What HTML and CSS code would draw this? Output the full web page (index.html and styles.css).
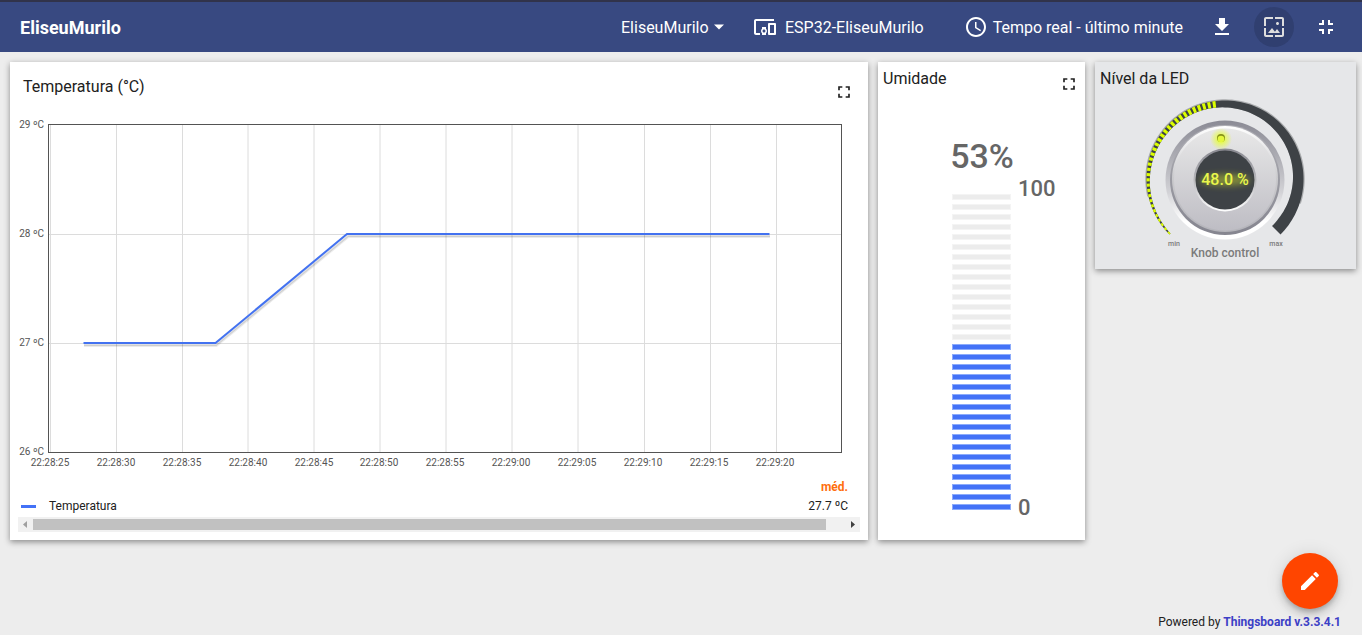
FILE: index.html
```html
<!DOCTYPE html>
<html lang="pt-BR">
<head>
<meta charset="utf-8">
<title>EliseuMurilo</title>
<meta name="viewport" content="width=device-width, initial-scale=1">
<link rel="stylesheet" href="styles.css">
</head>
<body>
<header class="toolbar">
  <h1 class="toolbar-title">EliseuMurilo</h1>
  <div class="state-select">
    <select class="state-input" aria-label="Estado"><option>EliseuMurilo</option></select>
    <svg class="caret" viewBox="0 0 12 6" aria-hidden="true"><path d="M1 .5h10L6 5.5z" fill="currentColor"/></svg>
  </div>
  <button class="nav-button entity" type="button">
    <svg class="icon-24" viewBox="0 0 24 24" aria-hidden="true"><path fill="currentColor" d="M3 6h18V4H3c-1.100 0-2 .9-2 2v12c0 1.100.9 2 2 2h4v-2H3V6zm10 6H9v1.780c-.61.55-1 1.330-1 2.220s.39 1.670 1 2.220V20h4v-1.780c.61-.55 1-1.340 1-2.220s-.39-1.670-1-2.220V12zm-2 5.500c-.83 0-1.500-.67-1.500-1.500s.67-1.500 1.500-1.500 1.500.67 1.500 1.500-.67 1.500-1.500 1.500zM22 8h-6c-.5 0-1 .5-1 1v10c0 .5.5 1 1 1h6c.5 0 1-.5 1-1V9c0-.5-.5-1-1-1zm-1 10h-4v-8h4v8z"/></svg>
    <span>ESP32-EliseuMurilo</span>
  </button>
  <button class="nav-button time" type="button">
    <svg class="icon-24" viewBox="0 0 24 24" aria-hidden="true"><path fill="currentColor" d="M11.990 2C6.470 2 2 6.480 2 12s4.470 10 9.990 10C17.520 22 22 17.520 22 12S17.520 2 11.990 2zM12 20c-4.420 0-8-3.580-8-8s3.580-8 8-8 8 3.580 8 8-3.580 8-8 8zm.5-13H11v6l5.250 3.150.75-1.230-4.500-2.670z"/></svg>
    <span>Tempo real - último minute</span>
  </button>
  <div class="actions">
    <button class="round-button" type="button" aria-label="Exportar">
      <svg class="icon-24" viewBox="0 0 24 24" aria-hidden="true"><path fill="currentColor" d="M19 9h-4V3H9v6H5l7 7 7-7zM5 18v2h14v-2H5z"/></svg>
    </button>
    <button class="round-button active" type="button" aria-label="Imagem do painel">
      <svg class="icon-24" viewBox="0 0 24 24" aria-hidden="true"><path fill="currentColor" d="M4 4h7V2H4c-1.100 0-2 .9-2 2v7h2V4zm6 9l-4 5h12l-3-4-2.030 2.710L10 13zm7-4.500c0-.83-.67-1.500-1.500-1.500S14 7.670 14 8.500s.67 1.500 1.500 1.500S17 9.330 17 8.500zM20 2h-7v2h7v7h2V4c0-1.100-.9-2-2-2zm0 18h-7v2h7c1.100 0 2-.9 2-2v-7h-2v7zM4 13H2v7c0 1.100.9 2 2 2h7v-2H4v-7z"/></svg>
    </button>
    <button class="round-button" type="button" aria-label="Sair da tela cheia">
      <svg class="icon-24" viewBox="0 0 24 24" aria-hidden="true"><path fill="currentColor" d="M5 16h3v3h2v-5H5v2zm3-8H5v2h5V5H8v3zm6 11h2v-3h3v-2h-5v5zm2-11V5h-2v5h5V8h-3z"/></svg>
    </button>
  </div>
</header>

<main class="dashboard">
  <section class="card chart-card">
    <div class="card-head wide">
      <h2 class="card-title">Temperatura (°C)</h2>
      <button class="expand" type="button" aria-label="Tela cheia">
        <svg class="icon-20" viewBox="0 0 24 24" aria-hidden="true"><path fill="currentColor" d="M7 14H5v5h5v-2H7v-3zm-2-4h2V7h3V5H5v5zm12 7h-3v2h5v-5h-2v3zM14 5v2h3v3h2V5h-5z"/></svg>
      </button>
    </div>
    <svg class="figure" viewBox="10 116 858 362" role="img" aria-label="Gráfico de temperatura">
      <path class="grid-line" d="M50.500 125v327M116.500 125v327M182.500 125v327M248 125v327M314 125v327M380 125v327M446 125v327M512 125v327M578 125v327M644.500 125v327M710.500 125v327M776.500 125v327M49 234.500h792M49 343.500h792"/>
      <path class="series-shadow" d="M84 345H216L348 236H770"/>
      <path class="series-shadow soft" d="M84 346H216.500L348.500 237H770"/>
      <path class="series" d="M83.500 343H215.500L347 234H769.500"/>
      <rect class="plot-frame" x="48.500" y="124.500" width="793" height="328"/>
      <g class="axis y-axis">
        <text x="44" y="128">29 ºC</text><text x="44" y="237">28 ºC</text><text x="44" y="346">27 ºC</text><text x="44" y="455">26 ºC</text>
      </g>
      <g class="axis x-axis">
        <text x="50" y="466">22:28:25</text><text x="116" y="466">22:28:30</text><text x="182" y="466">22:28:35</text><text x="248" y="466">22:28:40</text><text x="314" y="466">22:28:45</text><text x="379" y="466">22:28:50</text><text x="445" y="466">22:28:55</text><text x="511" y="466">22:29:00</text><text x="577" y="466">22:29:05</text><text x="643" y="466">22:29:10</text><text x="709" y="466">22:29:15</text><text x="775" y="466">22:29:20</text>
      </g>
    </svg>
    <table class="legend">
      <thead><tr><td></td><th scope="col">méd.</th></tr></thead>
      <tbody><tr><td><span class="legend-key"><span class="swatch"></span>Temperatura</span></td><td class="value">27.7 ºC</td></tr></tbody>
    </table>
    <div class="scrollbar" aria-hidden="true">
      <svg class="arrow dim" viewBox="0 0 15 15"><path d="M9 4v7L5 7.500z" fill="currentColor"/></svg>
      <div class="track"><div class="thumb"></div></div>
      <svg class="arrow" viewBox="0 0 15 15"><path d="M6 4v7l4-3.500z" fill="currentColor"/></svg>
    </div>
  </section>

  <section class="card">
    <div class="card-head">
      <h2 class="card-title">Umidade</h2>
      <button class="expand" type="button" aria-label="Tela cheia">
        <svg class="icon-20" viewBox="0 0 24 24" aria-hidden="true"><path fill="currentColor" d="M7 14H5v5h5v-2H7v-3zm-2-4h2V7h3V5H5v5zm12 7h-3v2h5v-5h-2v3zM14 5v2h3v3h2V5h-5z"/></svg>
      </button>
    </div>
    <svg class="figure" viewBox="878 102 207 438" role="img" aria-label="Umidade 53%">
      <defs>
        <pattern id="bar-off" x="952" y="194" width="59" height="10" patternUnits="userSpaceOnUse"><rect width="59" height="6" fill="#f4f4f4"/><rect x="1" y="1" width="57" height="4" fill="#ececec"/></pattern>
        <pattern id="bar-on" x="952" y="344" width="59" height="10" patternUnits="userSpaceOnUse"><rect width="59" height="6" fill="#8cabfb"/><rect x="1" y="1" width="57" height="4" fill="#4372f7"/></pattern>
      </defs>
      <rect x="952" y="194" width="59" height="150" fill="url(#bar-off)"/>
      <rect x="952" y="344" width="59" height="170" fill="url(#bar-on)"/>
      <text class="gauge-value" x="982" y="168">53%</text>
      <text class="gauge-limit" x="1018" y="196">100</text>
      <text class="gauge-limit" x="1018" y="515">0</text>
    </svg>
  </section>

  <section class="card knob-card">
    <div class="card-head short">
      <h2 class="card-title">Nível da LED</h2>
    </div>
    <svg class="figure" viewBox="1095 94 261 175" role="img" aria-label="Knob control 48.0 %">
      <defs>
        <linearGradient id="rim" x1="0" y1="0" x2="0" y2="1"><stop offset="0" stop-color="#8b8b95"/><stop offset=".3" stop-color="#acacb3"/><stop offset=".6" stop-color="#d2d2d6"/><stop offset=".85" stop-color="#fff"/></linearGradient>
        <linearGradient id="bevel" x1="0" y1="0" x2="0" y2="1"><stop offset="0" stop-color="#b0b0b6"/><stop offset="1" stop-color="#85858f"/></linearGradient>
        <linearGradient id="edge" x1="0" y1="0" x2="0" y2="1"><stop offset="0" stop-color="#fff"/><stop offset=".5" stop-color="#cacacd"/><stop offset="1" stop-color="#b4b4ba"/></linearGradient>
        <linearGradient id="face" x1="0" y1="0" x2="0" y2="1"><stop offset="0" stop-color="#e8e8e8"/><stop offset="1" stop-color="#bebdc4"/></linearGradient>
        <linearGradient id="well" x1="0" y1="0" x2="0" y2="1"><stop offset="0" stop-color="#888890"/><stop offset=".5" stop-color="#b8b8bc"/><stop offset="1" stop-color="#fff"/></linearGradient>
        <radialGradient id="glow"><stop offset=".3" stop-color="#e6ff33" stop-opacity=".8"/><stop offset="1" stop-color="#e6ff33" stop-opacity="0"/></radialGradient>
        <filter id="blur" x="-50%" y="-100%" width="200%" height="300%"><feGaussianBlur stdDeviation="3"/></filter>
      </defs>
      <g id="knob-scale"></g>
      <circle cx="1225" cy="180" r="59.500" fill="url(#rim)"/>
      <circle cx="1225" cy="180" r="55" fill="url(#bevel)"/>
      <circle cx="1225" cy="179" r="53" fill="url(#edge)"/>
      <circle cx="1225" cy="179.500" r="51" fill="url(#face)"/>
      <circle cx="1225" cy="180" r="31.500" fill="url(#well)"/>
      <circle cx="1225" cy="180" r="29.500" fill="#3e4246"/>
      <circle cx="1221" cy="139" r="11" fill="url(#glow)"/>
      <circle cx="1221" cy="138" r="4" fill="#85921a"/>
      <circle cx="1221" cy="139" r="3.300" fill="#e4f73c"/>
      <ellipse cx="1225" cy="180" rx="25" ry="6" fill="#dff22c" opacity=".4" filter="url(#blur)"/>
      <text class="knob-value" x="1225" y="185">48.0 %</text>
      <text class="knob-limit" x="1174" y="246">min</text>
      <text class="knob-limit" x="1276" y="246">max</text>
      <text class="knob-label" x="1225" y="257">Knob control</text>
    </svg>
  </section>
</main>

<button class="fab" type="button" aria-label="Editar">
  <svg class="icon-24" viewBox="0 0 24 24" aria-hidden="true"><path fill="currentColor" d="M3 17.250V21h3.750L17.810 9.940l-3.750-3.750L3 17.250zM20.710 7.040c.39-.39.39-1.020 0-1.410l-2.340-2.340c-.39-.39-1.020-.39-1.410 0l-1.830 1.830 3.750 3.750 1.830-1.830z"/></svg>
</button>
<footer class="footer">Powered by <a class="footer-link" href="#">Thingsboard v.3.3.4.1</a></footer>
<script src="knob.js"></script>
</body>
</html>
```

FILE: knob.js
```js
// Draws the tapered 270 degree scale of the knob, with lit ticks up to its value.
(function () {
  var cx = 1225, cy = 179, outer = 78.5, value = 0.48, ticks = 33;
  var scale = document.getElementById('knob-scale');
  function point(t, r) {
    var a = (135 + 270 * t) * Math.PI / 180;
    return (cx + r * Math.cos(a)).toFixed(2) + ',' + (cy + r * Math.sin(a)).toFixed(2);
  }
  function thickness(t) { return 1.5 + 10.5 * Math.min(1, t * 1.03); }
  function band(from, to, color, grow) {
    var pts = [], n = Math.max(2, Math.ceil((to - from) * 120)), i, t;
    for (i = 0; i <= n; i++) pts.push(point(from + (to - from) * i / n, outer + grow));
    for (i = n; i >= 0; i--) {
      t = from + (to - from) * i / n;
      pts.push(point(t, outer - thickness(t)));
    }
    var p = document.createElementNS('http://www.w3.org/2000/svg', 'polygon');
    p.setAttribute('points', pts.join(' '));
    p.setAttribute('fill', color);
    scale.appendChild(p);
  }
  band(0.12, 0.9, '#a9abad', 1.2);
  band(0, 1, '#3e4246', 0);
  for (var k = 0; k < ticks; k++) {
    var start = value * k / ticks;
    band(start, start + value / ticks * 0.58, '#dcff00', 0);
  }
})();
```

FILE: styles.css
```css
* { box-sizing: border-box; }

body {
  display: flex;
  flex-direction: column;
  min-height: 100vh;
  margin: 0;
  background: #ededed;
  color: #212121;
  font: 16px/24px Roboto, "Liberation Sans", sans-serif;
}

button, select {
  margin: 0;
  padding: 0;
  border: 0;
  background: none;
  color: inherit;
  font: inherit;
  cursor: pointer;
}

svg { display: block; }
.icon-24 { width: 24px; height: 24px; flex: none; }
.icon-20 { width: 20px; height: 20px; }

.toolbar {
  display: flex;
  align-items: center;
  height: 52px;
  padding: 0 16px 0 20px;
  border-top: 2px solid #31334a;
  background: #384981;
  color: #fff;
}

.toolbar-title {
  flex: 1;
  margin: 0;
  padding-top: 2px;
  font-size: 18px;
  font-weight: 700;
}

.state-select { display: flex; align-items: center; gap: 4px; margin-right: 28px; }
.state-input { appearance: none; outline: 0; padding-top: 2px; }
.caret { width: 12px; height: 6px; }
.nav-button { display: flex; align-items: center; white-space: nowrap; }
.nav-button span { padding-top: 2px; }
.entity { gap: 8px; margin-right: 40px; }
.time { gap: 5px; margin-right: 19px; }
.actions { display: flex; gap: 12px; }

.round-button {
  display: grid;
  place-items: center;
  width: 40px;
  height: 40px;
  border-radius: 50%;
}

.round-button.active { background: #303f70; color: #dedede; }

.dashboard {
  display: grid;
  grid-template-columns: 858fr 207fr 261fr;
  align-items: start;
  gap: 10px;
  padding: 10px 6px 10px 10px;
}

.card {
  min-width: 0;
  background: #fff;
  box-shadow: 0 2px 6px rgba(0, 0, 0, .42);
}

.chart-card { padding-bottom: 8px; }
.knob-card { background: #e6e7e9; }

.card-head {
  display: flex;
  align-items: flex-start;
  justify-content: space-between;
  height: 40px;
  padding: 5px 6px 0 5px;
}

.card-head.wide { height: 54px; padding: 13px 14px 0 13px; }
.card-head.short { height: 32px; }
.card-title { margin: 0; font-size: 16px; font-weight: 400; line-height: 24px; }
.expand { padding-top: 7px; }
.figure { width: 100%; height: auto; }

.grid-line { fill: none; stroke: #dcdcdc; }
.plot-frame { fill: none; stroke: #545454; }
.series { fill: none; stroke: #4372f0; stroke-width: 2; }
.series-shadow { fill: none; stroke: #000; stroke-opacity: .12; stroke-width: 2; }
.series-shadow.soft { stroke-opacity: .08; }
.axis { fill: #545454; font-size: 10px; }
.x-axis { text-anchor: middle; }
.y-axis { text-anchor: end; }

.legend {
  width: 100%;
  border-collapse: collapse;
  font-size: 12px;
  line-height: 19px;
}

.legend td, .legend th { padding: 0 20px 0 11px; }
.legend th { color: #ff6e0e; font-weight: 700; text-align: right; }
.legend .value { text-align: right; }
.legend-key { display: flex; align-items: center; gap: 13px; }
.swatch { width: 15px; height: 3px; background: #4372f7; }

.scrollbar {
  display: flex;
  height: 15px;
  margin: 1px 8px 0;
  background: #f1f1f1;
}

.arrow { width: 15px; height: 15px; color: #404040; }
.arrow.dim { color: #a0a0a0; }
.track { flex: 1; padding: 2px 0; }
.thumb { width: 97.7%; height: 11px; background: #c1c1c1; }

.gauge-value { fill: #666; font-size: 34px; font-weight: 500; text-anchor: middle; }
.gauge-limit { fill: #666; font-size: 22px; font-weight: 500; }

.knob-value { fill: #e9f74c; font-size: 16px; font-weight: 500; text-anchor: middle; }
.knob-limit { fill: #7b7b7b; font-size: 7px; font-weight: 500; text-anchor: middle; }
.knob-label { fill: #7b7b7b; font-size: 12px; font-weight: 500; text-anchor: middle; }

.fab {
  position: fixed;
  right: 24px;
  bottom: 26px;
  display: grid;
  place-items: center;
  width: 56px;
  height: 56px;
  border-radius: 50%;
  background: #ff4500;
  color: #fff;
  box-shadow: 0 3px 5px -1px rgba(0, 0, 0, .2), 0 6px 10px rgba(0, 0, 0, .14), 0 1px 18px rgba(0, 0, 0, .12);
}

.footer {
  margin-top: auto;
  padding: 0 21px 3px;
  font-size: 12px;
  line-height: 19px;
  text-align: right;
}

.footer-link { color: #3c40c6; font-weight: 700; text-decoration: none; }
```
